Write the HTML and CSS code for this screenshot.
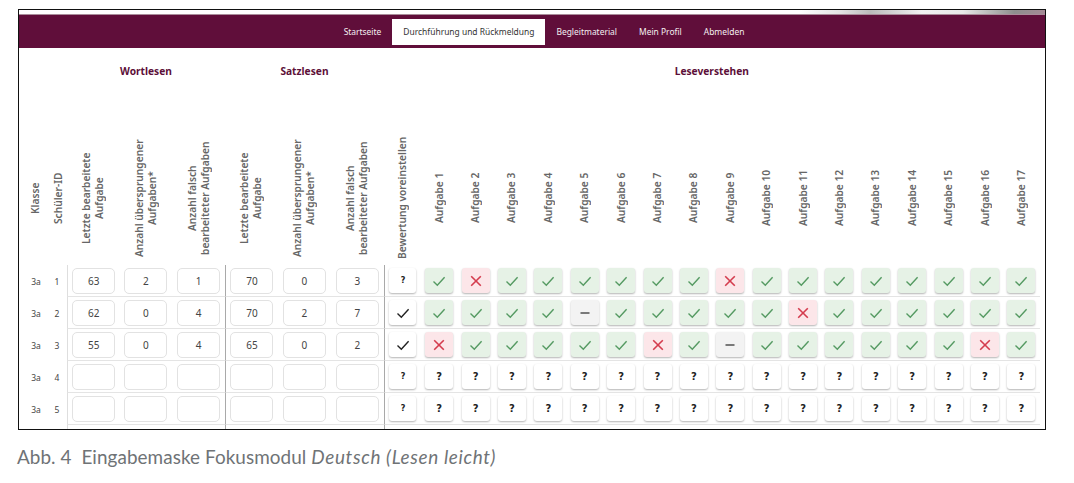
FILE: index.html
```html
<!DOCTYPE html>
<html lang="de">
<head>
<meta charset="utf-8">
<title>Eingabemaske Fokusmodul</title>
<link rel="stylesheet" href="styles.css">
</head>
<body>
<svg class="defs" aria-hidden="true">
<symbol id="c" viewBox="0 0 16 16"><path d="M2.5 8.6 6.3 12.2 13.6 4.2"/></symbol>
<symbol id="x" viewBox="0 0 16 16"><path d="M3.2 3.2 12.8 12.8M12.8 3.2 3.2 12.8"/></symbol>
<symbol id="d" viewBox="0 0 16 16"><path d="M3.5 8H12.5"/></symbol>
</svg>
<figure class="figure">
<div class="frame">
<div class="strip"></div>
<nav class="nav">
<a class="nav-item">Startseite</a>
<a class="nav-item active">Durchführung und Rückmeldung</a>
<a class="nav-item">Begleitmaterial</a>
<a class="nav-item">Mein Profil</a>
<a class="nav-item">Abmelden</a>
</nav>
<div class="table">
<div class="corner"></div><div class="group g1">Wortlesen</div><div class="group g2">Satzlesen</div><div class="group g3">Leseverstehen</div>

<div class="vh klasse">Klasse</div><div class="vh id">Schüler-ID</div>
<div class="vh">Letzte bearbeitete<br>Aufgabe</div><div class="vh">Anzahl übersprungener<br>Aufgaben*</div><div class="vh">Anzahl falsch<br>bearbeiteter Aufgaben</div>
<div class="vh">Letzte bearbeitete<br>Aufgabe</div><div class="vh">Anzahl übersprungener<br>Aufgaben*</div><div class="vh">Anzahl falsch<br>bearbeiteter Aufgaben</div>
<div class="vh">Bewertung voreinstellen</div>
<div class="vh">Aufgabe 1</div><div class="vh">Aufgabe 2</div><div class="vh">Aufgabe 3</div><div class="vh">Aufgabe 4</div><div class="vh">Aufgabe 5</div><div class="vh">Aufgabe 6</div><div class="vh">Aufgabe 7</div><div class="vh">Aufgabe 8</div><div class="vh">Aufgabe 9</div><div class="vh">Aufgabe 10</div><div class="vh">Aufgabe 11</div><div class="vh">Aufgabe 12</div><div class="vh">Aufgabe 13</div><div class="vh">Aufgabe 14</div><div class="vh">Aufgabe 15</div><div class="vh">Aufgabe 16</div><div class="vh">Aufgabe 17</div>

<div class="label">3a</div><div class="label id">1</div>
<div class="cell first"><input class="num" value="63"></div><div class="cell"><input class="num" value="2"></div><div class="cell"><input class="num" value="1"></div>
<div class="cell sep"><input class="num" value="70"></div><div class="cell"><input class="num" value="0"></div><div class="cell"><input class="num" value="3"></div>
<div class="cell sep"><button class="preset q">?</button></div>
<div class="cell"><button class="mark ok"><svg class="ico"><use href="#c"/></svg></button></div><div class="cell"><button class="mark no"><svg class="ico"><use href="#x"/></svg></button></div><div class="cell"><button class="mark ok"><svg class="ico"><use href="#c"/></svg></button></div><div class="cell"><button class="mark ok"><svg class="ico"><use href="#c"/></svg></button></div><div class="cell"><button class="mark ok"><svg class="ico"><use href="#c"/></svg></button></div><div class="cell"><button class="mark ok"><svg class="ico"><use href="#c"/></svg></button></div><div class="cell"><button class="mark ok"><svg class="ico"><use href="#c"/></svg></button></div><div class="cell"><button class="mark ok"><svg class="ico"><use href="#c"/></svg></button></div><div class="cell"><button class="mark no"><svg class="ico"><use href="#x"/></svg></button></div><div class="cell"><button class="mark ok"><svg class="ico"><use href="#c"/></svg></button></div><div class="cell"><button class="mark ok"><svg class="ico"><use href="#c"/></svg></button></div><div class="cell"><button class="mark ok"><svg class="ico"><use href="#c"/></svg></button></div><div class="cell"><button class="mark ok"><svg class="ico"><use href="#c"/></svg></button></div><div class="cell"><button class="mark ok"><svg class="ico"><use href="#c"/></svg></button></div><div class="cell"><button class="mark ok"><svg class="ico"><use href="#c"/></svg></button></div><div class="cell"><button class="mark ok"><svg class="ico"><use href="#c"/></svg></button></div><div class="cell"><button class="mark ok"><svg class="ico"><use href="#c"/></svg></button></div>

<div class="label">3a</div><div class="label id">2</div>
<div class="cell first"><input class="num" value="62"></div><div class="cell"><input class="num" value="0"></div><div class="cell"><input class="num" value="4"></div>
<div class="cell sep"><input class="num" value="70"></div><div class="cell"><input class="num" value="2"></div><div class="cell"><input class="num" value="7"></div>
<div class="cell sep"><button class="preset"><svg class="ico"><use href="#c"/></svg></button></div>
<div class="cell"><button class="mark ok"><svg class="ico"><use href="#c"/></svg></button></div><div class="cell"><button class="mark ok"><svg class="ico"><use href="#c"/></svg></button></div><div class="cell"><button class="mark ok"><svg class="ico"><use href="#c"/></svg></button></div><div class="cell"><button class="mark ok"><svg class="ico"><use href="#c"/></svg></button></div><div class="cell"><button class="mark skip"><svg class="ico"><use href="#d"/></svg></button></div><div class="cell"><button class="mark ok"><svg class="ico"><use href="#c"/></svg></button></div><div class="cell"><button class="mark ok"><svg class="ico"><use href="#c"/></svg></button></div><div class="cell"><button class="mark ok"><svg class="ico"><use href="#c"/></svg></button></div><div class="cell"><button class="mark ok"><svg class="ico"><use href="#c"/></svg></button></div><div class="cell"><button class="mark ok"><svg class="ico"><use href="#c"/></svg></button></div><div class="cell"><button class="mark no"><svg class="ico"><use href="#x"/></svg></button></div><div class="cell"><button class="mark ok"><svg class="ico"><use href="#c"/></svg></button></div><div class="cell"><button class="mark ok"><svg class="ico"><use href="#c"/></svg></button></div><div class="cell"><button class="mark ok"><svg class="ico"><use href="#c"/></svg></button></div><div class="cell"><button class="mark ok"><svg class="ico"><use href="#c"/></svg></button></div><div class="cell"><button class="mark ok"><svg class="ico"><use href="#c"/></svg></button></div><div class="cell"><button class="mark ok"><svg class="ico"><use href="#c"/></svg></button></div>

<div class="label">3a</div><div class="label id">3</div>
<div class="cell first"><input class="num" value="55"></div><div class="cell"><input class="num" value="0"></div><div class="cell"><input class="num" value="4"></div>
<div class="cell sep"><input class="num" value="65"></div><div class="cell"><input class="num" value="0"></div><div class="cell"><input class="num" value="2"></div>
<div class="cell sep"><button class="preset"><svg class="ico"><use href="#c"/></svg></button></div>
<div class="cell"><button class="mark no"><svg class="ico"><use href="#x"/></svg></button></div><div class="cell"><button class="mark ok"><svg class="ico"><use href="#c"/></svg></button></div><div class="cell"><button class="mark ok"><svg class="ico"><use href="#c"/></svg></button></div><div class="cell"><button class="mark ok"><svg class="ico"><use href="#c"/></svg></button></div><div class="cell"><button class="mark ok"><svg class="ico"><use href="#c"/></svg></button></div><div class="cell"><button class="mark ok"><svg class="ico"><use href="#c"/></svg></button></div><div class="cell"><button class="mark no"><svg class="ico"><use href="#x"/></svg></button></div><div class="cell"><button class="mark ok"><svg class="ico"><use href="#c"/></svg></button></div><div class="cell"><button class="mark skip"><svg class="ico"><use href="#d"/></svg></button></div><div class="cell"><button class="mark ok"><svg class="ico"><use href="#c"/></svg></button></div><div class="cell"><button class="mark ok"><svg class="ico"><use href="#c"/></svg></button></div><div class="cell"><button class="mark ok"><svg class="ico"><use href="#c"/></svg></button></div><div class="cell"><button class="mark ok"><svg class="ico"><use href="#c"/></svg></button></div><div class="cell"><button class="mark ok"><svg class="ico"><use href="#c"/></svg></button></div><div class="cell"><button class="mark ok"><svg class="ico"><use href="#c"/></svg></button></div><div class="cell"><button class="mark no"><svg class="ico"><use href="#x"/></svg></button></div><div class="cell"><button class="mark ok"><svg class="ico"><use href="#c"/></svg></button></div>

<div class="label">3a</div><div class="label id">4</div>
<div class="cell first"><input class="num"></div><div class="cell"><input class="num"></div><div class="cell"><input class="num"></div>
<div class="cell sep"><input class="num"></div><div class="cell"><input class="num"></div><div class="cell"><input class="num"></div>
<div class="cell sep"><button class="preset q">?</button></div>
<div class="cell"><button class="mark">?</button></div><div class="cell"><button class="mark">?</button></div><div class="cell"><button class="mark">?</button></div><div class="cell"><button class="mark">?</button></div><div class="cell"><button class="mark">?</button></div><div class="cell"><button class="mark">?</button></div><div class="cell"><button class="mark">?</button></div><div class="cell"><button class="mark">?</button></div><div class="cell"><button class="mark">?</button></div><div class="cell"><button class="mark">?</button></div><div class="cell"><button class="mark">?</button></div><div class="cell"><button class="mark">?</button></div><div class="cell"><button class="mark">?</button></div><div class="cell"><button class="mark">?</button></div><div class="cell"><button class="mark">?</button></div><div class="cell"><button class="mark">?</button></div><div class="cell"><button class="mark">?</button></div>

<div class="label">3a</div><div class="label id">5</div>
<div class="cell first"><input class="num"></div><div class="cell"><input class="num"></div><div class="cell"><input class="num"></div>
<div class="cell sep"><input class="num"></div><div class="cell"><input class="num"></div><div class="cell"><input class="num"></div>
<div class="cell sep"><button class="preset q">?</button></div>
<div class="cell"><button class="mark">?</button></div><div class="cell"><button class="mark">?</button></div><div class="cell"><button class="mark">?</button></div><div class="cell"><button class="mark">?</button></div><div class="cell"><button class="mark">?</button></div><div class="cell"><button class="mark">?</button></div><div class="cell"><button class="mark">?</button></div><div class="cell"><button class="mark">?</button></div><div class="cell"><button class="mark">?</button></div><div class="cell"><button class="mark">?</button></div><div class="cell"><button class="mark">?</button></div><div class="cell"><button class="mark">?</button></div><div class="cell"><button class="mark">?</button></div><div class="cell"><button class="mark">?</button></div><div class="cell"><button class="mark">?</button></div><div class="cell"><button class="mark">?</button></div><div class="cell"><button class="mark">?</button></div>

<div class="tail t1"></div><div class="tail t2"></div><div class="tail t3"></div>
</div>
</div>
<figcaption class="caption">Abb. 4&nbsp; Eingabemaske Fokusmodul <em class="caption-em">Deutsch (Lesen leicht)</em></figcaption>
</figure>
</body>
</html>
```
FILE: styles.css
```css
* { box-sizing: border-box; }
html, body { margin: 0; padding: 0; background: #fff; }
body { width: 1074px; height: 483px; overflow: hidden; font-family: "Noto Sans", sans-serif; }
.defs { display: none; }
.figure { margin: 0; padding: 9px 0 0 18px; }
.frame { width: 1028px; height: 421px; border: 1px solid #111; overflow: hidden; }
.strip { height: 4px; background: linear-gradient(90deg, #fff 0 76%, #e4e4e4 80%, #bbb 83%, #f2f2f2 88%, #e8e8e8 92%, #8e8e8e 97%, #a58a96 100%); }
.nav { height: 34px; display: flex; align-items: center; justify-content: center; padding-left: 24px; background: #600e3a; border-top: 1px solid #a98c9a; }
.nav-item { height: 26px; padding: 0 11px; font-size: 8.45px; line-height: 26px; color: #f4eef1; }
.nav-item.active { background: #fff; color: #333; }
.table { display: grid; grid-template-columns: 34px 14px repeat(3, 52.67px) repeat(3, 53px) 37px repeat(17, 36.4px); grid-template-rows: 82px 135px repeat(5, 32px) 4px; }
.corner { grid-column: span 2; }
.group { padding-top: 16px; text-align: center; font-size: 10.2px; font-weight: 700; color: #5c0f38; line-height: 14px; }
.g1, .g2 { grid-column: span 3; }
.g3 { grid-column: span 18; }
.vh { writing-mode: vertical-rl; transform: rotate(180deg); justify-self: center; height: 136px; text-align: center; font-size: 10.2px; line-height: 13px; font-weight: 600; color: #666; white-space: nowrap; }
.vh.klasse { margin-right: 2px; }
.vh.id { margin-right: 4px; }
.label { display: flex; align-items: center; justify-content: center; font-size: 8.5px; color: #444; }
.label.id { padding-right: 6px; }
.cell { display: flex; align-items: center; justify-content: center; border-bottom: 1px solid #e4e4e4; }
.cell.first { border-left: 1px solid #dedede; }
.cell.sep { border-left: 1px solid #a9a9a9; }
.num { width: 43px; height: 26px; padding: 0; border: 1px solid #e2e2e2; border-radius: 5px; background: #fff; text-align: center; font-family: "Noto Sans", sans-serif; font-size: 10px; color: #444; outline: none; }
.preset, .mark { display: flex; align-items: center; justify-content: center; padding: 0; border: 0; background: #fff; box-shadow: 0 1px 2px rgba(0, 0, 0, .3); border-radius: 3px; font-family: "DejaVu Sans", sans-serif; font-weight: 700; font-size: 10px; color: #222; }
.preset { width: 27px; height: 25px; }
.preset.q { font-size: 8px; }
.mark { width: 28px; height: 25px; }
.ok { background: #e6f2e6; }
.no { background: #fce6e9; }
.skip { background: #f3f3f3; }
.ico { width: 16px; height: 16px; fill: none; stroke: #222; stroke-width: 1.4; }
.ok .ico { stroke: #559a62; }
.no .ico { stroke: #d43c4e; stroke-width: 1.6; }
.skip .ico { stroke: #444; }
.tail { grid-row: 8; }
.t1 { grid-column: 3; border-left: 1px solid #dedede; }
.t2 { grid-column: 6; border-left: 1px solid #a9a9a9; }
.t3 { grid-column: 9; border-left: 1px solid #a9a9a9; }
.caption { margin-top: 16px; margin-left: -1px; font-family: Lato, sans-serif; font-size: 18.9px; line-height: 22px; color: #6f7376; letter-spacing: .07px; }
.caption-em { letter-spacing: .65px; }
```
